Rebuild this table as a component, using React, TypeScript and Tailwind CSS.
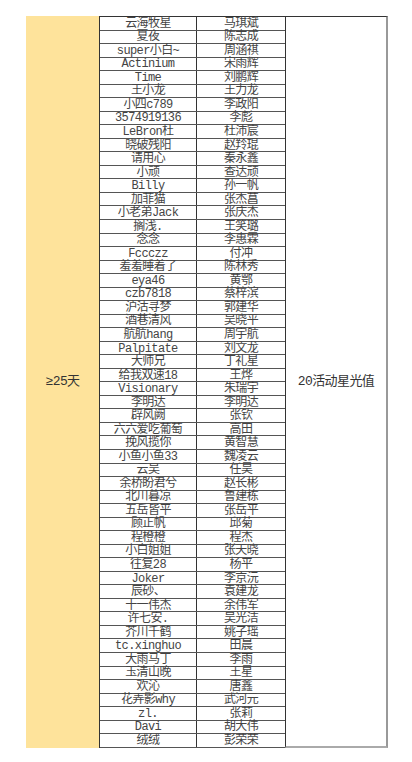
const rows: [string, string][] = [
  ["云海牧星", "马琪斌"],
  ["夏夜", "陈志成"],
  ["super小白~", "周涵祺"],
  ["Actinium", "宋雨辉"],
  ["Time", "刘鹏辉"],
  ["王小龙", "王力龙"],
  ["小四c789", "李政阳"],
  ["3574919136", "李彪"],
  ["LeBron杜", "杜沛宸"],
  ["晓破残阳", "赵羚琨"],
  ["请用心", "秦永鑫"],
  ["小顽", "查达顽"],
  ["Billy", "孙一帆"],
  ["加菲猫", "张杰菖"],
  ["小老弟Jack", "张庆杰"],
  ["搁浅.", "王笑璐"],
  ["念念", "李惠霖"],
  ["Fccczz", "付冲"],
  ["羞羞睡着了", "陈林秀"],
  ["eya46", "黄鄂"],
  ["czb7818", "蔡梓滨"],
  ["沪沽寻梦", "郭建华"],
  ["酒巷清风", "吴晓平"],
  ["航航hang", "周宇航"],
  ["Palpitate", "刘文龙"],
  ["大师兄", "丁礼星"],
  ["给我双速18", "王烨"],
  ["Visionary", "朱瑞宇"],
  ["李明达", "李明达"],
  ["辟风阙", "张钦"],
  ["六六爱吃葡萄", "高田"],
  ["挽风揽你", "黄智慧"],
  ["小鱼小鱼33", "魏凌云"],
  ["云吴", "任昊"],
  ["余桥盼君兮", "赵长彬"],
  ["北川暮凉", "鲁建栋"],
  ["五岳皆平", "张岳平"],
  ["顾正帆", "邱菊"],
  ["程橙橙", "程杰"],
  ["小白姐姐", "张天晓"],
  ["往复28", "杨平"],
  ["Joker", "李京沅"],
  ["辰砂、", "袁建龙"],
  ["十一伟杰", "余伟军"],
  ["许七安.", "吴光洁"],
  ["芥川千鹤", "姚子瑶"],
  ["tc.xinghuo", "田晨"],
  ["大雨马丁", "李雨"],
  ["玉清山晚", "王星"],
  ["欢沁", "唐鑫"],
  ["花弄影why", "武河元"],
  ["zl.", "张莉"],
  ["Davi", "胡大伟"],
  ["绒绒", "彭荣荣"],
];

export default function App() {
  return (
    <div
      className="w-[412px] h-[762px] bg-white pt-4 pl-[26px] text-[12px] text-[#444] tracking-[-0.6px]"
      style={{ fontFamily: '"Liberation Mono", "Noto Sans CJK SC", monospace' }}
    >
      <div className="flex h-[732px]">
        {/* Yellow day column */}
        <div className="w-[73px] bg-[#fee39b] flex items-center justify-center text-[13px] text-[#333]">
          ≥25天
        </div>

        {/* Name columns */}
        <div className="w-[186px] flex flex-col border-t border-l border-[#333]">
          {rows.map(([nick, name], i) => (
            <div key={i} className="flex-1 min-h-0 flex border-b border-[#555] leading-none">
              <div className="w-[97px] flex items-center justify-center pt-px border-r border-[#333] whitespace-nowrap">
                {nick}
              </div>
              <div className="flex-1 flex items-center justify-center pt-px whitespace-nowrap">{name}</div>
            </div>
          ))}
        </div>

        {/* Reward column */}
        <div className="w-[103px] flex items-center justify-center border-t border-l border-[#333] border-r-2 border-r-[#999] border-b-2 border-b-[#aaa] text-[13px] text-[#333]">
          20活动星光值
        </div>
      </div>
    </div>
  );
}
